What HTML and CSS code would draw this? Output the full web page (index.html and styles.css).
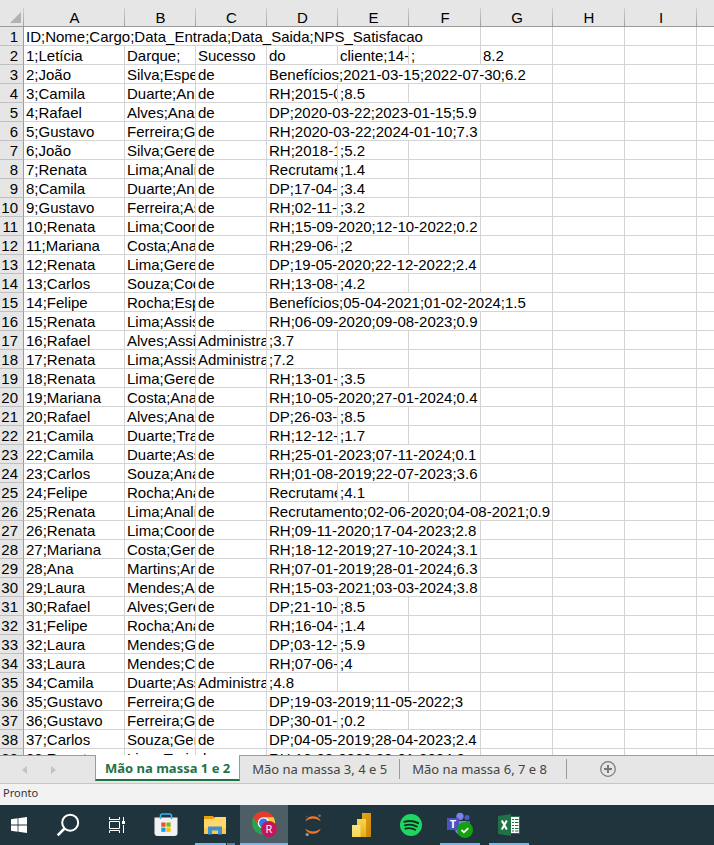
FILE: index.html
```html
<!DOCTYPE html>
<html lang="pt-BR">
<head>
<meta charset="utf-8">
<title>Mão na massa</title>
<link rel="stylesheet" href="styles.css">
</head>
<body>
<main class="sheet">
<table class="grid">
<colgroup><col class="c-num"><col class="c-a"><col class="c-s"><col class="c-s"><col class="c-s"><col class="c-s"><col class="c-l"><col class="c-l"><col class="c-l"><col class="c-l"><col></colgroup>
<thead>
<tr><th class="corner"><svg width="11" height="11" viewBox="0 0 11 11" aria-hidden="true"><path d="M11 0v11H0z" fill="#b2b2b2"/></svg></th><th>A</th><th>B</th><th>C</th><th>D</th><th>E</th><th>F</th><th>G</th><th>H</th><th>I</th><th></th></tr>
</thead>
<tbody>
<tr><th>1</th><td colspan="6">ID;Nome;Cargo;Data_Entrada;Data_Saida;NPS_Satisfacao</td><td></td><td></td><td></td><td></td></tr>
<tr><th>2</th><td>1;Letícia</td><td>Darque;</td><td>Sucesso</td><td>do</td><td>cliente;14-0</td><td>;</td><td>8.2</td><td></td><td></td><td></td></tr>
<tr><th>3</th><td>2;João</td><td>Silva;Espe</td><td>de</td><td colspan="4">Benefícios;2021-03-15;2022-07-30;6.2</td><td></td><td></td><td></td></tr>
<tr><th>4</th><td>3;Camila</td><td>Duarte;Ana</td><td>de</td><td>RH;2015-0</td><td>;8.5</td><td></td><td></td><td></td><td></td><td></td></tr>
<tr><th>5</th><td>4;Rafael</td><td>Alves;Anal</td><td>de</td><td colspan="3">DP;2020-03-22;2023-01-15;5.9</td><td></td><td></td><td></td><td></td></tr>
<tr><th>6</th><td>5;Gustavo</td><td>Ferreira;Ge</td><td>de</td><td colspan="3">RH;2020-03-22;2024-01-10;7.3</td><td></td><td></td><td></td><td></td></tr>
<tr><th>7</th><td>6;João</td><td>Silva;Gere</td><td>de</td><td>RH;2018-1</td><td>;5.2</td><td></td><td></td><td></td><td></td><td></td></tr>
<tr><th>8</th><td>7;Renata</td><td>Lima;Anali</td><td>de</td><td>Recrutame</td><td>;1.4</td><td></td><td></td><td></td><td></td><td></td></tr>
<tr><th>9</th><td>8;Camila</td><td>Duarte;Ana</td><td>de</td><td>DP;17-04-2</td><td>;3.4</td><td></td><td></td><td></td><td></td><td></td></tr>
<tr><th>10</th><td>9;Gustavo</td><td>Ferreira;As</td><td>de</td><td>RH;02-11-2</td><td>;3.2</td><td></td><td></td><td></td><td></td><td></td></tr>
<tr><th>11</th><td>10;Renata</td><td>Lima;Coor</td><td>de</td><td colspan="3">RH;15-09-2020;12-10-2022;0.2</td><td></td><td></td><td></td><td></td></tr>
<tr><th>12</th><td>11;Mariana</td><td>Costa;Ana</td><td>de</td><td>RH;29-06-2</td><td>;2</td><td></td><td></td><td></td><td></td><td></td></tr>
<tr><th>13</th><td>12;Renata</td><td>Lima;Gere</td><td>de</td><td colspan="3">DP;19-05-2020;22-12-2022;2.4</td><td></td><td></td><td></td><td></td></tr>
<tr><th>14</th><td>13;Carlos</td><td>Souza;Coo</td><td>de</td><td>RH;13-08-2</td><td>;4.2</td><td></td><td></td><td></td><td></td><td></td></tr>
<tr><th>15</th><td>14;Felipe</td><td>Rocha;Esp</td><td>de</td><td colspan="4">Benefícios;05-04-2021;01-02-2024;1.5</td><td></td><td></td><td></td></tr>
<tr><th>16</th><td>15;Renata</td><td>Lima;Assis</td><td>de</td><td colspan="3">RH;06-09-2020;09-08-2023;0.9</td><td></td><td></td><td></td><td></td></tr>
<tr><th>17</th><td>16;Rafael</td><td>Alves;Assi</td><td>Administra</td><td>;3.7</td><td></td><td></td><td></td><td></td><td></td><td></td></tr>
<tr><th>18</th><td>17;Renata</td><td>Lima;Assis</td><td>Administra</td><td>;7.2</td><td></td><td></td><td></td><td></td><td></td><td></td></tr>
<tr><th>19</th><td>18;Renata</td><td>Lima;Gere</td><td>de</td><td>RH;13-01-2</td><td>;3.5</td><td></td><td></td><td></td><td></td><td></td></tr>
<tr><th>20</th><td>19;Mariana</td><td>Costa;Ana</td><td>de</td><td colspan="3">RH;10-05-2020;27-01-2024;0.4</td><td></td><td></td><td></td><td></td></tr>
<tr><th>21</th><td>20;Rafael</td><td>Alves;Anal</td><td>de</td><td>DP;26-03-2</td><td>;8.5</td><td></td><td></td><td></td><td></td><td></td></tr>
<tr><th>22</th><td>21;Camila</td><td>Duarte;Tra</td><td>de</td><td>RH;12-12-2</td><td>;1.7</td><td></td><td></td><td></td><td></td><td></td></tr>
<tr><th>23</th><td>22;Camila</td><td>Duarte;Ass</td><td>de</td><td colspan="3">RH;25-01-2023;07-11-2024;0.1</td><td></td><td></td><td></td><td></td></tr>
<tr><th>24</th><td>23;Carlos</td><td>Souza;Ana</td><td>de</td><td colspan="3">RH;01-08-2019;22-07-2023;3.6</td><td></td><td></td><td></td><td></td></tr>
<tr><th>25</th><td>24;Felipe</td><td>Rocha;Ana</td><td>de</td><td>Recrutame</td><td>;4.1</td><td></td><td></td><td></td><td></td><td></td></tr>
<tr><th>26</th><td>25;Renata</td><td>Lima;Anali</td><td>de</td><td colspan="4">Recrutamento;02-06-2020;04-08-2021;0.9</td><td></td><td></td><td></td></tr>
<tr><th>27</th><td>26;Renata</td><td>Lima;Coor</td><td>de</td><td colspan="3">RH;09-11-2020;17-04-2023;2.8</td><td></td><td></td><td></td><td></td></tr>
<tr><th>28</th><td>27;Mariana</td><td>Costa;Gere</td><td>de</td><td colspan="3">RH;18-12-2019;27-10-2024;3.1</td><td></td><td></td><td></td><td></td></tr>
<tr><th>29</th><td>28;Ana</td><td>Martins;An</td><td>de</td><td colspan="3">RH;07-01-2019;28-01-2024;6.3</td><td></td><td></td><td></td><td></td></tr>
<tr><th>30</th><td>29;Laura</td><td>Mendes;As</td><td>de</td><td colspan="3">RH;15-03-2021;03-03-2024;3.8</td><td></td><td></td><td></td><td></td></tr>
<tr><th>31</th><td>30;Rafael</td><td>Alves;Gere</td><td>de</td><td>DP;21-10-2</td><td>;8.5</td><td></td><td></td><td></td><td></td><td></td></tr>
<tr><th>32</th><td>31;Felipe</td><td>Rocha;Ana</td><td>de</td><td>RH;16-04-2</td><td>;1.4</td><td></td><td></td><td></td><td></td><td></td></tr>
<tr><th>33</th><td>32;Laura</td><td>Mendes;Ge</td><td>de</td><td>DP;03-12-2</td><td>;5.9</td><td></td><td></td><td></td><td></td><td></td></tr>
<tr><th>34</th><td>33;Laura</td><td>Mendes;Co</td><td>de</td><td>RH;07-06-2</td><td>;4</td><td></td><td></td><td></td><td></td><td></td></tr>
<tr><th>35</th><td>34;Camila</td><td>Duarte;Ass</td><td>Administra</td><td>;4.8</td><td></td><td></td><td></td><td></td><td></td><td></td></tr>
<tr><th>36</th><td>35;Gustavo</td><td>Ferreira;Ge</td><td>de</td><td colspan="3">DP;19-03-2019;11-05-2022;3</td><td></td><td></td><td></td><td></td></tr>
<tr><th>37</th><td>36;Gustavo</td><td>Ferreira;Ge</td><td>de</td><td>DP;30-01-2</td><td>;0.2</td><td></td><td></td><td></td><td></td><td></td></tr>
<tr><th>38</th><td>37;Carlos</td><td>Souza;Ger</td><td>de</td><td colspan="3">DP;04-05-2019;28-04-2023;2.4</td><td></td><td></td><td></td><td></td></tr>
<tr><th>39</th><td>38;Renata</td><td>Lima;Train</td><td>de</td><td colspan="3">RH;18-08-2020;23-01-2024;8</td><td></td><td></td><td></td><td></td></tr>
</tbody>
</table>
</main>
<nav class="tabs" aria-label="Planilhas">
<div class="arrows">
<button aria-label="Anterior"><svg width="5" height="8" viewBox="0 0 5 8"><path d="M5 0v8L0 4z" fill="#c3c3c3"/></svg></button>
<button aria-label="Próxima"><svg width="5" height="8" viewBox="0 0 5 8"><path d="M0 0v8l5-4z" fill="#c3c3c3"/></svg></button>
</div>
<button class="tab active">Mão na massa 1 e 2</button>
<button class="tab">Mão na massa 3, 4 e 5</button>
<button class="tab last">Mão na massa 6, 7 e 8</button>
<button class="add" aria-label="Nova planilha"><svg width="16" height="16" viewBox="0 0 16 16"><circle cx="8" cy="8" r="7.3" fill="none" stroke="#777" stroke-width="1.2"/><path d="M8 4v8M4 8h8" stroke="#777" stroke-width="2"/></svg></button>
</nav>
<div class="status">Pronto</div>
<footer class="taskbar">
<button class="start" aria-label="Iniciar"><svg width="16" height="16" viewBox="0 0 16 16"><path fill="#fff" d="M0 2.2 6.6 1.3v6.2H0zM7.4 1.2 16 0v7.5H7.4zM0 8.4h6.6v6.3L0 13.8zM7.4 8.4H16V16l-8.6-1.2z"/></svg></button>
<button aria-label="Pesquisar"><svg width="24" height="24" viewBox="0 0 24 24"><circle cx="14.2" cy="9.7" r="8" fill="none" stroke="#fff" stroke-width="2"/><path d="M8.5 15.5 1.7 22.3" stroke="#fff" stroke-width="2.6"/></svg></button>
<button aria-label="Visão de tarefas"><svg width="16" height="16" viewBox="0 0 16 16" fill="none" stroke="#fff"><path d="M.5 0v2.5h10V0M.5 4.5h10v7H.5zM.5 16v-2.5h10V16M14.5 0v4M14.5 8v8"/><path fill="#fff" stroke="none" d="M13 4h3v3h-3z"/></svg></button>
<button aria-label="Microsoft Store"><svg width="24" height="24" viewBox="0 0 24 24"><path d="M6.5 6V3q0-2 2-2h7q2 0 2 2v3" fill="none" stroke="#32b8ed" stroke-width="1.6"/><path d="M.5 4.5h23V20q0 3-3 3h-17q-3 0-3-3z" fill="#f1f1f3"/><path d="M6.5 4.5v1.2M17.5 4.5v1.2" stroke="#1687bd" stroke-width="1.6"/><path fill="#ef4f23" d="M7.3 9.5h4.2v4.2H7.3z"/><path fill="#7fba00" d="M12.4 9.5h4.2v4.2h-4.2z"/><path fill="#00a4ef" d="M7.3 14.6h4.2v4.2H7.3z"/><path fill="#ffb900" d="M12.4 14.6h4.2v4.2h-4.2z"/></svg></button>
<button class="multi" aria-label="Explorador de Arquivos"><svg width="22" height="19" viewBox="0 0 22 19"><path fill="#e6a20c" d="M0 0h9l1.5 2H22v4H0z"/><path fill="#ffd869" d="M0 3h9l2-2h11v17H0z"/><path fill="#fbc84c" d="M0 12h22v6H0z"/><path fill="#3c91d4" d="M4 10.5h14V18.5h-4v-4H8v4H4z"/></svg></button>
<button class="current" aria-label="Chrome"><svg width="26" height="26" viewBox="0 0 26 26"><circle cx="12.5" cy="12" r="11.5" fill="#2ba24c"/><path fill="#e33b2e" d="M2.5 6.2A11.5 11.5 0 0 1 22.5 6.2H12.5L7.5 15z"/><path fill="#fcc934" d="M12.5 6.2h10A11.5 11.5 0 0 1 12.5 23.5l5-8.5z"/><circle cx="12.5" cy="12" r="5.8" fill="#fff"/><circle cx="12.5" cy="12" r="4.5" fill="#3478e5"/><circle cx="18" cy="18" r="8" fill="#c2185b"/><text x="18" y="22" text-anchor="middle" class="badge-letter thin">R</text></svg></button>
<button aria-label="Jupyter"><svg width="20" height="24" viewBox="0 0 20 24"><path fill="#f37726" d="M2.2 8.2A8.6 8.6 0 0 1 17.8 8.2Q10 2.8 2.2 8.2zM2.2 15.8A8.6 8.6 0 0 0 17.8 15.8Q10 21.2 2.2 15.8z"/><circle cx="16.5" cy="2.7" r="1.3" fill="#767677"/><circle cx="3.5" cy="3.4" r=".8" fill="#616262"/><circle cx="4.2" cy="21.5" r="1.6" fill="#9e9e9e"/></svg></button>
<button aria-label="Power BI"><svg width="20" height="24" viewBox="0 0 20 24"><defs><linearGradient id="p1" x2="1" y2="1"><stop stop-color="#e6ad10"/><stop offset="1" stop-color="#c87e0e"/></linearGradient><linearGradient id="p2" x2="0" y2="1"><stop stop-color="#f6d751"/><stop offset="1" stop-color="#e6ad10"/></linearGradient><linearGradient id="p3" x2="0" y2="1"><stop stop-color="#f9e589"/><stop offset="1" stop-color="#f6d751"/></linearGradient></defs><path fill="url(#p1)" d="M10 0h9v24h-9z"/><path fill="url(#p2)" d="M5 6h9v18H5z"/><path fill="url(#p3)" d="M0 12h8.5v12H0z"/></svg></button>
<button aria-label="Spotify"><svg width="22" height="22" viewBox="0 0 22 22"><circle cx="11" cy="11" r="11" fill="#1ed760"/><path d="M4.2 7.8q7.5-2.2 14 1.4M4.8 11.3q6.5-1.9 12 1.3M5.4 14.7q5.3-1.5 9.8 1.1" fill="none" stroke="#142b24" stroke-width="1.9" stroke-linecap="round"/></svg></button>
<button class="open" aria-label="Teams"><svg width="26" height="26" viewBox="0 0 26 26"><circle cx="13" cy="4.3" r="3.6" fill="#7b83eb"/><circle cx="20" cy="5.5" r="2.5" fill="#5059c9"/><path fill="#5059c9" d="M14 9h9v6q0 5-5 5z"/><path fill="#7b83eb" d="M8 9h11v8q0 5-5 6-6-1-6-6z"/><path fill="#4b53bc" d="M0 6h12v12H0z"/><text x="6" y="16" text-anchor="middle" class="badge-letter">T</text><circle cx="18" cy="18" r="8" fill="#13a10e"/><path d="m14.5 18 2.4 2.3 4.4-4.2" fill="none" stroke="#fff" stroke-width="1.8"/></svg></button>
<button class="open" aria-label="Excel"><svg width="22" height="22" viewBox="0 0 22 22"><path fill="#fff" stroke="#207245" d="M11 2.5h10.5v17H11z"/><path fill="#207245" d="M0 2 13 0v22L0 20z"/><path d="M14 5.5h2M14 8.5h2M14 11.5h2M14 14.5h2M14 17h2M17 5.5h3.5M17 8.5h3.5M17 11.5h3.5M17 14.5h3.5M17 17h3.5" stroke="#207245" stroke-width="1.2"/><path d="m3.8 6.5 5 9M8.8 6.5l-5 9" stroke="#fff" stroke-width="2"/></svg></button>
</footer>
</body>
</html>
```
FILE: styles.css
```css
* { box-sizing: border-box; }

body {
  margin: 0;
  height: 100vh;
  display: flex;
  flex-direction: column;
  overflow: hidden;
  background: #fff;
  font-family: "Liberation Sans", Arial, sans-serif;
  color: #000;
}

button {
  margin: 0;
  padding: 0;
  border: 0;
  background: none;
  font: inherit;
  color: inherit;
}

svg { display: block; }

.sheet {
  flex: 1;
  min-height: 0;
  overflow: hidden;
}

.grid {
  width: 100%;
  table-layout: fixed;
  border-collapse: separate;
  border-spacing: 0;
  font-size: 15px;
  line-height: 16px;
}

.c-num { width: 24px; }
.c-a { width: 101px; }
.c-s { width: 71px; }
.c-l { width: 72px; }

.grid td {
  height: 19px;
  padding: 2px 0 0 2px;
  border-right: 1px solid #d4d4d4;
  border-bottom: 1px solid #d4d4d4;
  white-space: nowrap;
  overflow: hidden;
}

.grid td:last-child { border-right: 0; }

.grid th {
  padding: 0;
  background: #e6e6e6;
  font-weight: 400;
  text-align: center;
}

.grid tbody th {
  padding: 2px 5px 0 0;
  border-right: 1px solid #9b9b9b;
  border-bottom: 1px solid #c0c0c0;
  text-align: right;
}

.grid thead th {
  height: 27px;
  padding-top: 10px;
  border-bottom: 1px solid #9b9b9b;
  background: linear-gradient(#d0d0d0, #a0a0a0) right bottom / 1px 18px no-repeat #e6e6e6;
}

.grid thead th:last-child { background: #e6e6e6; }

.grid thead .corner { padding: 8px 3px 0 0; }

.corner svg { margin-left: auto; }

.tabs {
  height: 29px;
  display: flex;
  align-items: flex-start;
  background: #e6e6e6;
  border-top: 1px solid #9b9b9b;
  border-bottom: 1px solid #c6c6c6;
  font-family: "Noto Sans", "Open Sans", sans-serif;
  font-size: 13px;
  line-height: 18px;
  color: #444;
}

.arrows {
  width: 95px;
  height: 27px;
  padding-left: 22px;
  display: flex;
  align-items: center;
  gap: 24px;
}

.tab {
  height: 20px;
  margin-top: 3px;
  padding: 0 12px;
  border-right: 1px solid #9b9b9b;
  white-space: nowrap;
}

.tab.last { padding-right: 19px; }

.tab.active {
  height: 26px;
  margin-top: -1px;
  padding: 2px 9px 0;
  border-left: 1px solid #9b9b9b;
  border-bottom: 2px solid #217346;
  background: #fff;
  font-weight: 700;
  color: #217346;
}

.add { margin: 5px 0 0 33px; }

.status {
  height: 21px;
  padding-left: 3px;
  background: #f2f2f2;
  font: 11px/18px "Noto Sans", "Open Sans", sans-serif;
  color: #333;
}

.taskbar {
  height: 40px;
  display: flex;
  gap: 1px;
  background: #20343e;
}

.taskbar button {
  width: 48px;
  display: grid;
  place-items: center;
}

.taskbar .start {
  width: 43px;
  padding-right: 5px;
}

.taskbar .open {
  background: linear-gradient(#76b9ed, #76b9ed) center bottom / 40px 2px no-repeat;
}

.taskbar .multi {
  background: linear-gradient(90deg, #76b9ed 31px, #20343e 31px, #20343e 32px, #5285ac 32px) center bottom / 40px 2px no-repeat;
}

.taskbar .current {
  background: #4e5e66;
  border-bottom: 2px solid #76b9ed;
}

.badge-letter {
  font: 700 11px "Open Sans", sans-serif;
  fill: #fff;
}

.badge-letter.thin { font-weight: 400; }
```
